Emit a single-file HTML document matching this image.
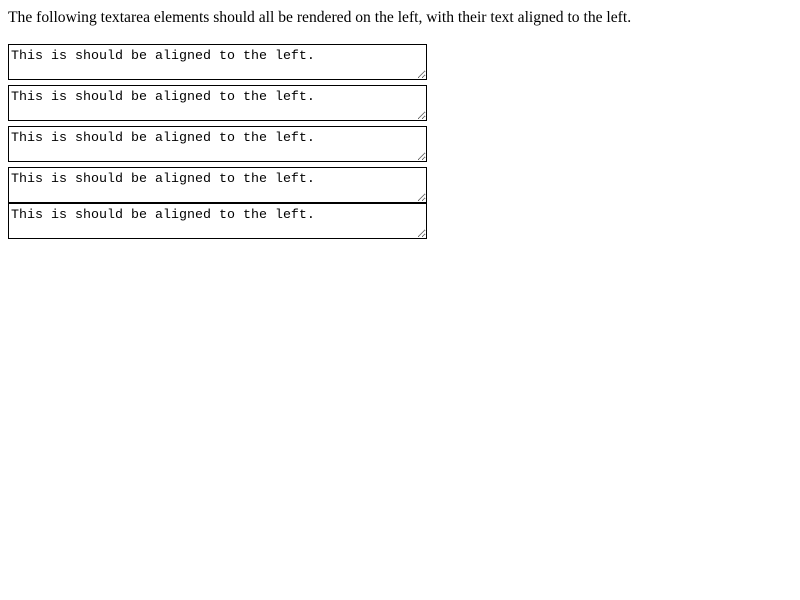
<!DOCTYPE html>
<html><head><style>
html,body{margin:0;padding:0;background:#fff;}
p{position:absolute;left:8px;top:9px;margin:0;font:15.6px/18px "Liberation Serif",serif;color:#000;white-space:nowrap;}
textarea{position:absolute;left:8px;width:419px;height:36px;box-sizing:border-box;border:1px solid #000;padding:4px 2px 0 2px;margin:0;font:13.333px/15px "Liberation Mono",monospace;color:#000;background:#fff;text-align:left;outline:none;}
</style></head><body>
<p>The following textarea elements should all be rendered on the left, with their text aligned to the left.</p>
<textarea style="top:44px">This is should be aligned to the left.</textarea>
<textarea style="top:85px">This is should be aligned to the left.</textarea>
<textarea style="top:126px">This is should be aligned to the left.</textarea>
<textarea style="top:167px">This is should be aligned to the left.</textarea>
<textarea style="top:203px">This is should be aligned to the left.</textarea>
</body></html>
